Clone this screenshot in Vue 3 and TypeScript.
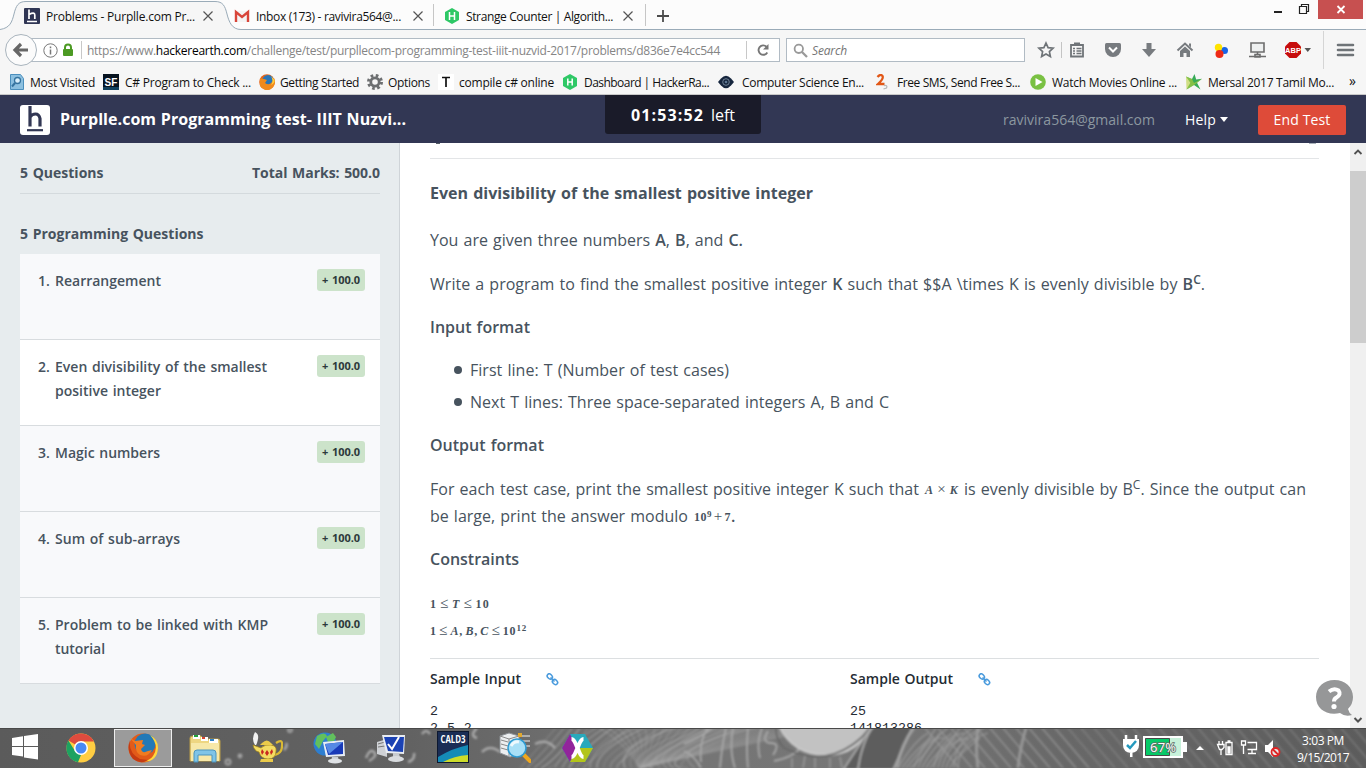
<script setup lang="ts">
import type { Directive } from 'vue'

// Stretches or tightens tracking so that a label fills the given width in pixels.
const vFit: Directive<HTMLElement, number> = {
  mounted(el, { value }) {
    const natural = el.getBoundingClientRect().width
    const count = (el.textContent ?? '').length
    if (count > 1) el.style.letterSpacing = `${(value - natural) / count}px`
  },
}

interface Bookmark { icon: string; label: string; slot: number; width: number; lead: number }

const bookmarks: Bookmark[] = [
  { icon: 'visited', label: 'Most Visited', slot: 93, width: 65, lead: 20 },
  { icon: 'sf', label: 'C# Program to Check ...', slot: 156, width: 126, lead: 22 },
  { icon: 'firefox', label: 'Getting Started', slot: 108, width: 79, lead: 21 },
  { icon: 'gear', label: 'Options', slot: 71, width: 42, lead: 21 },
  { icon: 't', label: 'compile c# online', slot: 125, width: 95, lead: 21 },
  { icon: 'hr', label: 'Dashboard | HackerRa...', slot: 155, width: 125, lead: 21 },
  { icon: 'eye', label: 'Computer Science En...', slot: 158, width: 122, lead: 24 },
  { icon: 'two', label: 'Free SMS, Send Free S...', slot: 154, width: 123, lead: 21 },
  { icon: 'play', label: 'Watch Movies Online ...', slot: 156, width: 125, lead: 22 },
  { icon: 'star', label: 'Mersal 2017 Tamil Mo...', slot: 160, width: 126, lead: 22 },
]

const questions = [
  { id: 1, lines: [{ text: 'Rearrangement', width: 106 }] },
  { id: 2, lines: [{ text: 'Even divisibility of the smallest', width: 212 }, { text: 'positive integer', width: 106 }], active: true },
  { id: 3, lines: [{ text: 'Magic numbers', width: 105 }] },
  { id: 4, lines: [{ text: 'Sum of sub-arrays', width: 125 }] },
  { id: 5, lines: [{ text: 'Problem to be linked with KMP', width: 213 }, { text: 'tutorial', width: 50 }] },
]

const sampleInput = '2\n2 5 2'
const sampleOutput = '25\n141813286'

const hatch = Array.from({ length: 34 }, (_, i) => 925 + i * 13)
const strands = Array.from({ length: 26 }, (_, i) => i)
</script>

<template>
  <div class="screen">
    <header class="tabs">
      <svg class="tabshape" width="1366" height="30" viewBox="0 0 1366 30">
        <path d="M0 29.5C10 28 12 22 14 14C16 6 18 1.500 26 1.500H215C223 1.500 225 6 227 14C229 22 232 29.500 241 29.500V30H0Z" fill="#f6f6f6" />
        <path d="M0 29.500C10 28 12 22 14 14C16 6 18 1.500 26 1.500H215C223 1.500 225 6 227 14C229 22 232 29.500 241 29.500H1366" fill="none" stroke="#9aabb8" />
      </svg>
      <div class="tab first">
        <svg class="fav" width="16" height="16" viewBox="0 0 16 16"><rect width="16" height="16" rx="1" fill="#2f3554" /><path d="M5 1.500V11M5 6.500Q10.800 3.500 10.800 7V11M3 13.500h10" fill="none" stroke="#fff" stroke-width="1.700" /></svg>
        <span class="name"><span v-fit="149" class="t">Problems - Purplle.com Pr...</span></span>
        <svg width="12" height="12" viewBox="0 0 12 12"><path d="M1.500 1.500l9 9M10.500 1.500l-9 9" stroke="#555" stroke-width="1.200" /></svg>
      </div>
      <div class="tab second">
        <svg class="fav" width="16" height="16" viewBox="0 0 16 16"><path d="M1 3h14v11H1z" fill="#f4f4f4" /><path d="M2 14V4l6 5 6-5v10" fill="none" stroke="#d8453a" stroke-width="2.400" /></svg>
        <span class="name"><span v-fit="145" class="t">Inbox (173) - ravivira564@...</span></span>
        <svg width="12" height="12" viewBox="0 0 12 12"><path d="M1.500 1.500l9 9M10.500 1.500l-9 9" stroke="#555" stroke-width="1.200" /></svg>
      </div>
      <div class="tab third">
        <svg class="fav" width="16" height="16" viewBox="0 0 16 16"><path d="M8 0l7 4v8l-7 4-7-4V4z" fill="#2ec866" /><path d="M5.500 4v8M10.500 4v8M5.500 8h5" stroke="#fff" stroke-width="1.500" /></svg>
        <span class="name"><span v-fit="147" class="t">Strange Counter | Algorith...</span></span>
        <svg width="12" height="12" viewBox="0 0 12 12"><path d="M1.500 1.500l9 9M10.500 1.500l-9 9" stroke="#555" stroke-width="1.200" /></svg>
      </div>
      <svg class="plus" width="12" height="12" viewBox="0 0 12 12"><path d="M6 0v12M0 6h12" stroke="#4c4c4c" stroke-width="1.800" /></svg>
      <div class="winbtns">
        <svg width="98" height="19" viewBox="0 0 98 19">
          <path d="M6 12h8" stroke="#222" stroke-width="2" />
          <path d="M31.500 6.500h7v7h-7zM33.500 6V4.500h7v7H39" fill="none" stroke="#222" stroke-width="1.200" />
          <rect x="50" width="45" height="19" fill="#c75050" />
          <path d="M69.500 6l7 7M76.500 6l-7 7" stroke="#fff" stroke-width="1.800" />
        </svg>
      </div>
    </header>

    <div class="nav">
      <div class="url">
        <svg class="info" width="15" height="15" viewBox="0 0 15 15"><circle cx="7.500" cy="7.500" r="6.700" fill="none" stroke="#777" /><path d="M7.500 3.500v1.700M7.500 6.500v5" stroke="#777" stroke-width="1.500" /></svg>
        <svg class="lock" width="12" height="14" viewBox="0 0 12 14"><path d="M3 7V4.500a3 3 0 0 1 6 0V7" fill="none" stroke="#4c9a23" stroke-width="2" /><rect x="1" y="6" width="10" height="7" rx="1" fill="#4c9a23" /></svg>
        <i class="sep"></i>
        <span class="addr"><span v-fit="633" class="t">https://www.<b>hackerearth.com</b>/challenge/test/purpllecom-programming-test-iiit-nuzvid-2017/problems/d836e7e4cc544</span></span>
        <i class="sep"></i>
        <svg class="reload" width="14" height="14" viewBox="0 0 14 14"><path d="M11.300 9.500A4.700 4.700 0 1 1 10.500 3.700" fill="none" stroke="#777" stroke-width="1.900" /><path d="M12.500 1v5.500H7z" fill="#777" /></svg>
      </div>
      <svg class="back" width="34" height="34" viewBox="0 0 34 34"><circle cx="17" cy="17" r="15.500" fill="#fbfbfb" stroke="#a9b4bd" /><path d="M17 11l-6 6 6 6M11.500 17H24" fill="none" stroke="#666" stroke-width="3.200" /></svg>
      <div class="search">
        <svg width="15" height="15" viewBox="0 0 15 15"><circle cx="5.800" cy="5.800" r="4.200" fill="none" stroke="#999" stroke-width="1.800" /><path d="M9 9l5 5" stroke="#999" stroke-width="2.300" /></svg>
        <span v-fit="35" class="t">Search</span>
      </div>
      <svg class="tool bm" width="26" height="20" viewBox="0 0 26 20"><path d="M10 3l2.100 4.600 5 .6-3.700 3.400 1 5-4.400-2.500-4.400 2.500 1-5L2.900 8.200l5-.6z" fill="none" stroke="#6f7478" stroke-width="1.700" /><path d="M25.500 2v16" stroke="#c4c4c4" /></svg>
      <div class="tools">
        <svg width="20" height="20" viewBox="0 0 20 20"><path d="M4 5h12v11.500H4z" fill="none" stroke="#6f7478" stroke-width="1.800" /><path d="M7 2.500h6V6H7z" fill="#6f7478" /><path d="M6 8.500h2M6 11h2M6 13.500h2M9.500 8.500h5M9.500 11h5M9.500 13.500h5" fill="none" stroke="#6f7478" stroke-width="1.300" /></svg>
        <svg width="20" height="20" viewBox="0 0 20 20"><path d="M3.500 3h13q1.500 0 1.500 1.500V9a8 8 0 0 1-16 0V4.500Q2 3 3.500 3z" fill="#777b7f" /><path d="M6 7.500l4 4 4-4" fill="none" stroke="#fff" stroke-width="2" /></svg>
        <svg width="20" height="20" viewBox="0 0 20 20"><path d="M7.500 3h5v6H17l-7 8-7-8h4.500z" fill="#777b7f" /></svg>
        <svg width="20" height="20" viewBox="0 0 20 20"><path d="M2.500 10.500L10 3.500l7.500 7" fill="none" stroke="#777b7f" stroke-width="2" /><path d="M5 11l5-4.500 5 4.500v6h-3.500v-4h-3v4H5zM14 3.500h2v4l-2-2z" fill="#777b7f" /></svg>
        <svg width="20" height="20" viewBox="0 0 20 20"><circle cx="13.500" cy="10.500" r="3.500" fill="#1764e8" /><circle cx="7.500" cy="7.500" r="3.700" fill="#ffe300" /><circle cx="8.500" cy="14" r="4" fill="#ee2a16" /></svg>
        <svg width="20" height="20" viewBox="0 0 20 20"><path d="M4 3h13v9H4zM10.500 12v3M2 16.500h17M8 14.500h5v2.500H8z" fill="#eef0f0" stroke="#6d6d6d" stroke-width="1.600" /></svg>
        <svg width="28" height="20" viewBox="0 0 28 20"><path d="M6.500 2h7L18 6.500v7L13.500 18h-7L2 13.500v-7z" fill="#c70d0d" /><text x="10" y="13" font-size="7.500" font-weight="bold" fill="#fff" text-anchor="middle" font-family="Liberation Sans">ABP</text><path d="M21.500 8H28l-3.250 4z" fill="#555" /></svg>
      </div>
      <svg class="menu" width="34" height="38" viewBox="0 0 34 38"><path d="M.5 0v38" stroke="#d5d5d5" /><path d="M15 14h15M15 19h15M15 24h15" stroke="#6f7478" stroke-width="2.600" stroke-linecap="round" /></svg>
    </div>

    <div class="bookmarks">
      <div v-for="b in bookmarks" :key="b.icon" class="bookmark" :style="{ width: b.slot + 'px' }">
        <span class="bicon" :style="{ width: b.lead + 'px' }">
          <svg width="16" height="16" viewBox="0 0 16 16">
            <template v-if="b.icon === 'visited'"><path d="M.5.500h10l3 4v11H.5z" fill="#8cc0e0" stroke="#4b8fbd" /><circle cx="7.500" cy="6.500" r="3" fill="#d9effb" stroke="#35739f" stroke-width="1.300" /><path d="M5 9l-3 3.500" stroke="#35739f" stroke-width="2" /></template>
            <template v-else-if="b.icon === 'sf'"><rect width="16" height="16" fill="#07131f" /><path d="M0 13h16v3H0z" fill="#12405c" /><text x="8" y="11.500" font-size="10" font-weight="bold" fill="#fff" text-anchor="middle" font-family="Liberation Sans">SF</text></template>
            <template v-else-if="b.icon === 'firefox'"><circle cx="8" cy="8" r="7.800" fill="#e4671c" /><circle cx="9" cy="6.500" r="5.500" fill="#2a76b8" /><path d="M1 4q2 1 4 1l3 1-2 3q4 3 7-1l2-4a8 8 0 0 1-14 8z" fill="#f08a1d" /><path d="M12 2q3 5 0 9 4-2 3.500-5z" fill="#ffcf3f" /></template>
            <template v-else-if="b.icon === 'gear'"><circle cx="8" cy="8" r="6.500" fill="none" stroke="#6d6f71" stroke-width="3" stroke-dasharray="2.600 2.505" /><circle cx="8" cy="8" r="4.200" fill="none" stroke="#6d6f71" stroke-width="2.800" /></template>
            <template v-else-if="b.icon === 't'"><rect width="16" height="16" fill="#fff" /><path d="M4 3.500h8M8 3.500V13" stroke="#111" stroke-width="1.700" /></template>
            <template v-else-if="b.icon === 'hr'"><path d="M7 0l7 4v8l-7 4-7-4V4z" fill="#2ec866" /><path d="M4.800 4.500v7M9.200 4.500v7M5 8h4" stroke="#fff" stroke-width="1.500" /></template>
            <template v-else-if="b.icon === 'eye'"><path d="M0 8l3-3.500Q8-1 13 4.500L16 8l-3 3.500Q8 17 3 11.500z" fill="#16263e" /><circle cx="8" cy="8" r="3.300" fill="none" stroke="#8496aa" stroke-width=".8" /><circle cx="8" cy="8" r="1.300" fill="#5c7692" /></template>
            <template v-else-if="b.icon === 'two'"><path d="M1.500 3Q4.500-.5 6.500 2q1.500 2.500-4.500 8h6.500" fill="none" stroke="#e25717" stroke-width="2.300" /><path d="M8 11.500q4-.5 2.500 2.500l-3 1" fill="none" stroke="#b7b7b7" stroke-width="1.300" /></template>
            <template v-else-if="b.icon === 'play'"><circle cx="8" cy="8" r="7.800" fill="#7ac143" /><path d="M5.500 4l7 4-7 4z" fill="#fff" /></template>
            <template v-else><path d="M8.500 0l1.700 5.500 5.800-.8-5 4 3.500 6.800L8 11l-7.500 4.500 3.800-6.800L0 2.500l6 2.500z" fill="#37ab57" /><path d="M0 2.500L6 5l2 4 8-4.300-5 4L8 11l-7.500 4.500z" fill="#b8cf3b" opacity=".6" /></template>
          </svg>
        </span>
        <span v-fit="b.width" class="t">{{ b.label }}</span>
      </div>
      <span class="more">»</span>
    </div>

    <div class="apphead">
      <svg class="logo" width="30" height="30" viewBox="0 0 30 30"><rect width="30" height="30" rx="3" fill="#fff" /><path d="M10 1v20.500M10 12q2-3 5.500-3t4.500 4.500v8" fill="none" stroke="#323754" stroke-width="3.200" /><path d="M7 25.200h16" stroke="#323754" stroke-width="2.200" /></svg>
      <span class="apptitle"><span v-fit="346" class="t">Purplle.com Programming test- IIIT Nuzvi...</span></span>
      <div class="timer"><b v-fit="73" class="t">01:53:52</b><span v-fit="24" class="t">left</span></div>
      <span class="mail"><span v-fit="152" class="t">ravivira564@gmail.com</span></span>
      <span class="help"><span v-fit="31" class="t">Help</span><svg width="8" height="5" viewBox="0 0 8 5"><path d="M0 0h8L4 5z" fill="#fff" /></svg></span>
      <span class="end"><span v-fit="57" class="t">End Test</span></span>
    </div>

    <div class="page">
      <aside>
        <div class="totals"><span v-fit="83.500" class="t">5 Questions</span><span v-fit="128" class="t">Total Marks: 500.0</span></div>
        <div class="group"><span v-fit="183.500" class="t">5 Programming Questions</span></div>
        <div v-for="q in questions" :key="q.id" class="question" :class="{ active: q.active }">
          <span class="num">{{ q.id }}.</span>
          <div class="qname"><div v-for="l in q.lines" :key="l.text"><span v-fit="l.width" class="t">{{ l.text }}</span></div></div>
          <span class="marks"><span v-fit="38" class="t">+ 100.0</span></span>
        </div>
      </aside>
      <main>
        <div class="cut"><i></i><i class="pale"></i></div>
        <h1><span v-fit="383" class="t">Even divisibility of the smallest positive integer</span></h1>
        <p class="p1"><span v-fit="313" class="t">You are given three numbers <b>A</b>, <b>B</b>, and <b>C.</b></span></p>
        <p class="p2"><span v-fit="775" class="t">Write a program to find the smallest positive integer <b>K</b> such that $$A \times K is evenly divisible by <b>B<sup>C</sup></b>.</span></p>
        <h2><span v-fit="100" class="t">Input format</span></h2>
        <ul>
          <li><span v-fit="259" class="t">First line: T (Number of test cases)</span></li>
          <li><span v-fit="419" class="t">Next T lines: Three space-separated integers A, B and C</span></li>
        </ul>
        <h2><span v-fit="114" class="t">Output format</span></h2>
        <p class="p3">
          <span v-fit="489" class="t">For each test case, print the smallest positive integer K such that</span><span class="math gap"><span v-fit="34" class="t"><i>A</i> <u>×</u> <i>K</i></span></span><span v-fit="342" class="t">is evenly divisible by B<sup>C</sup>. Since the output can</span>
        </p>
        <p class="p4"><span v-fit="258" class="t">be large, print the answer modulo</span><span class="math gap"><span v-fit="37" class="t">10<sup>9</sup> <u>+</u> 7</span></span><b>.</b></p>
        <h2 class="cons"><span v-fit="89" class="t">Constraints</span></h2>
        <p class="math m1"><span v-fit="60" class="t">1 <u>≤</u> <i>T</i> <u>≤</u> 10</span></p>
        <p class="math"><span v-fit="97" class="t">1 <u>≤</u> <i>A</i>, <i>B</i>, <i>C</i> <u>≤</u> 10<sup>12</sup></span></p>
        <div class="samples">
          <section>
            <h3><span v-fit="91" class="t">Sample Input</span><svg width="13" height="13" viewBox="0 0 13 13"><ellipse cx="3.800" cy="3.500" rx="2.900" ry="2.200" transform="rotate(45 3.800 3.500)" /><ellipse cx="9" cy="9" rx="2.900" ry="2.200" transform="rotate(45 9 9)" /><path d="M4.500 4.500l4 4" /></svg></h3>
            <pre>{{ sampleInput }}</pre>
          </section>
          <section>
            <h3><span v-fit="103" class="t">Sample Output</span><svg width="13" height="13" viewBox="0 0 13 13"><ellipse cx="3.800" cy="3.500" rx="2.900" ry="2.200" transform="rotate(45 3.800 3.500)" /><ellipse cx="9" cy="9" rx="2.900" ry="2.200" transform="rotate(45 9 9)" /><path d="M4.500 4.500l4 4" /></svg></h3>
            <pre>{{ sampleOutput }}</pre>
          </section>
        </div>
      </main>
      <div class="scroll">
        <svg width="16" height="28" viewBox="0 0 16 28"><path d="M4.500 11L8 7.500l3.500 3.500" fill="none" stroke="#505050" stroke-width="1.800" /></svg>
        <div class="thumb"></div>
        <svg class="down" width="16" height="16" viewBox="0 0 16 16"><path d="M4.500 6L8 9.500 11.500 6" fill="none" stroke="#505050" stroke-width="2" /></svg>
      </div>
      <svg class="bubble" width="40" height="40" viewBox="0 0 40 40"><path d="M19.500 1C30 1 38 8 38 18q0 7-5 12 1 4 4 6-7 2-12-2C12 37 1 30 1 18 1 8 9 1 19.500 1z" fill="#8b8c8d" opacity=".9" /><path d="M14 12.500q5-4 9.500-1 3 4-2 7-2.500 1.300-2.500 4" fill="none" stroke="#fff" stroke-width="4" /><circle cx="19" cy="27.500" r="2.600" fill="#fff" /></svg>
    </div>

    <footer>
      <svg class="wall" width="1366" height="40" viewBox="0 0 1366 40">
        <defs>
          <linearGradient id="bar" x1="0" x2="1366" y1="0" y2="0" gradientUnits="userSpaceOnUse"><stop offset="0" stop-color="#5b5b5b" /><stop offset=".3" stop-color="#626262" /><stop offset=".47" stop-color="#747474" /><stop offset=".65" stop-color="#777" /><stop offset=".78" stop-color="#686868" /><stop offset="1" stop-color="#5c5c5c" /></linearGradient>
          <filter id="soft" x="-10%" y="-20%" width="120%" height="140%"><feGaussianBlur stdDeviation=".9" /></filter>
        </defs>
        <rect width="1366" height="40" fill="url(#bar)" />
        <g filter="url(#soft)" fill="none" stroke="#a8a8a8" stroke-width="1.800">
          <path v-for="n in strands" :key="'l' + n" :d="`M${520 + n * 7} 40Q${540 + n * 5} ${18 + (n % 5) * 5} ${556 + n * 8} 0`" :opacity="0.25 + (n % 4) * 0.12" />
          <path v-for="n in strands" :key="'c' + n" :d="`M640 40Q${625 + n * 5} 15 ${600 + n * 9} 0`" opacity=".3" />
          <circle cx="228" cy="34" r="2.500" /><circle cx="240" cy="28" r="1.500" /><circle cx="290" cy="2" r="2" /><path d="M284 22q4-4 2-7M366 30q4-10 8-6t-5 9M408 34q7-2 6-9M422 6q4-6 8 0M477 0q-8 8 0 10M482 24q8-8 18 0M535 16q12-6 20 4" stroke-width="2.500" />
          <path d="M684 16q15-6 28-16M684 23q10 4 17 17M708 0q-9 12-7 34M720 40q2-23 6-40M735 40q-6-18-2-40M748 40q-2-20 0-40M760 30q-4-14 2-30M768 3q-7 12 3 12t2 12M774 33q20-4 27-14" />
          <path d="M779-2q14 29 47 29t43-29z" fill="#c2c2c2" stroke="#cacaca" />
          <path d="M776 0q-1 10 8 20l12 5q30 10 56-8 13-9 17-17" stroke="#666" /><path d="M792 40v-10M803 40l2-12M815 40V30M830 40V30M842 40l-2-11" opacity=".6" />
          <path d="M872-2L843 42h15Q862 12 874-2h39Q903 20 893 42h-37" fill="#5d5d5d" stroke="#a8a8a8" />
          <path d="M914 0q-13 16-17 40M978 0q-3 18 0 40M1018 40q2-20 8-40" stroke-width="3" opacity=".7" />
          <path v-for="n in 16" :key="'h' + n" :d="`M${894 + n * 4} 40Q${910 + n * 3} ${8 + (n % 5) * 6} ${924 + n * 4} ${n % 3 * 5}`" opacity=".5" />
          <path v-for="x in hatch" :key="x" :d="`M${x} 0l34 40`" stroke="#999" :opacity="x > 1060 ? 0.4 : 0.7" />
        </g>
        <path d="M0 .5h1366" stroke="#494949" />
      </svg>
      <div class="start"><svg width="26" height="26" viewBox="0 0 26 26"><path d="M0 4l11-1.700V12H0zM12 2l14-2v12H12zM0 13h11v9.500L0 21zM12 13h14v12.500L12 23.500z" fill="#fff" /></svg></div>
      <div class="apps">
        <span><svg width="32" height="32" viewBox="0 0 32 32"><circle cx="16" cy="16" r="14.500" fill="#ffcd42" /><path d="M16 16L3.500 8.500A14.500 14.500 0 0 1 29 9.500H16z" fill="#de4b3e" /><path d="M3.400 8.600L10 19l6 4-3 7.300A14.500 14.500 0 0 1 3.400 8.600z" fill="#1da261" /><circle cx="16" cy="16" r="7" fill="#fff" /><circle cx="16" cy="16" r="5.500" fill="#4889f4" /></svg></span>
        <span class="on"><svg width="32" height="32" viewBox="0 0 32 32"><circle cx="16" cy="16" r="14.500" fill="#e25b19" /><circle cx="18" cy="12" r="10.500" fill="#2279b7" /><path d="M3 6l5 3 8-1-1 4 3 1-4 4q1 5 7 2l4-1q-4 8-12 5Q8 20 9 13z" fill="#f17b20" /><path d="M23 3q10 11 3 21-4 6-13 5 17 3 18-13Q31 7 23 3z" fill="#ffd83c" /><path d="M3 8q-2 13 10 19l8 1Q14 33 6 27-1 18 3 8z" fill="#c53b12" /></svg></span>
        <span><svg width="32" height="32" viewBox="0 0 32 32"><path d="M1 6q0-2 3-2h8l2 3h15q2 0 2 2v20H1z" fill="#eed681" stroke="#b99d49" /><path d="M2 11h28v18H2z" fill="#f7e8a8" /><path d="M4 3h7v4H4z" fill="#fff" /><path d="M5 3h4v2H5z" fill="#21a33a" /><path d="M12 5h7v4h-7zM20 7h9v4h-9z" fill="#fff" /><path d="M13 5h3v2h-3z" fill="#d5452f" /><path d="M21 7h4v2h-4z" fill="#2f82c7" /><path d="M5 30v-9q0-3 3-3h16q3 0 3 3v9h-4v-7H9v7z" fill="#7fc4e7" stroke="#4c94bd" /></svg></span>
        <span><svg width="32" height="32" viewBox="0 0 32 32"><path d="M4 13Q0 7 4 0q4 2 3 7t-2 6z" fill="#f1f1f1" /><path d="M25 11q7-5 6 3 0 7-7 9" fill="none" stroke="#d9b935" stroke-width="2.200" /><path d="M2 13l8 3q4-4 10-3t5 6q0 8-8 8-7 0-9-7-5-1-6-7z" fill="#f3dc63" stroke="#a78516" stroke-width=".7" /><path d="M11 11q5-5 9 0l2 2H9zM10 27h12v3H9z" fill="#ebcb4a" /><path d="M11 17l2 3-2 3-1-3zM16 18l2 3-2 3-2-3zM21 17l1 3-2 3-1-3z" fill="#c9291f" /></svg></span>
        <span><svg width="32" height="32" viewBox="0 0 32 32"><circle cx="12" cy="12" r="11.500" fill="#2d7ed0" /><path d="M4 4q8-5 10 0l-4 5-4 8-4-5zM13 5l7-4 3 4-2 4-6 1z" fill="#62c05d" /><path d="M10 10l21-2 1 16-19 1z" fill="#e7edf4" /><path d="M12 12l18-2v12l-15 1z" fill="#183ab8" /><path d="M12 12l18-2-14 12z" fill="#5589e5" /><path d="M19 25h6l1 4h-8z" fill="#c9ced4" /><ellipse cx="22" cy="29" rx="7" ry="2.500" fill="#dfe2e5" /></svg></span>
        <span><svg width="32" height="32" viewBox="0 0 32 32"><path d="M2 10l10-3v18L2 22z" fill="#cfd2d6" /><path d="M3 12l7-2M3 15l7-1" stroke="#777" /><path d="M7 3h23l-1 19-18-1z" fill="#e9edf2" /><path d="M9 5h20l-1 15-15-1z" fill="#1b42b4" /><path d="M13 12l4 5 7-12" fill="none" stroke="#fff" stroke-width="2" /><path d="M18 21h6l1 5h-7z" fill="#c7cbd0" /><ellipse cx="21" cy="27" rx="8" ry="3" fill="#d9dcdf" /></svg></span>
        <span><svg class="dict" width="32" height="32" viewBox="0 0 32 32"><rect x=".5" y=".5" width="31" height="31" fill="#1a2d55" stroke="#0d1830" /><path d="M1 26Q16 17 31 14v17H1z" fill="#158bb7" /><path d="M6 31q11-6 25-7v7z" fill="#cddc2b" /><text x="16" y="11.500" font-size="10" font-weight="bold" textLength="25" lengthAdjust="spacingAndGlyphs" fill="#fff" text-anchor="middle" font-family="Open Sans">CALD3</text></svg></span>
        <span><svg width="32" height="32" viewBox="0 0 32 32"><path d="M1 4l9-3 10 3v18l-9 3L1 21z" fill="#eceef0" stroke="#8d9297" /><path d="M1 4l9 3 10-3M10 7v17M2 8l7 2M2 12l7 2M2 16l7 2" fill="none" stroke="#888" /><path d="M20 4h11M22 9h9M24 14h7" stroke="#f0f0f0" /><path d="M19 1h4v4h-4z" fill="#e2a82d" /><path d="M25 23l6 6" stroke="#efa71d" stroke-width="4" stroke-linecap="round" /><circle cx="18" cy="16" r="9" fill="#a8e0f7" stroke="#2e9bd2" stroke-width="1.600" /><path d="M12 14q3-5 8-4" stroke="#fff" fill="none" stroke-width="3" opacity=".8" /></svg></span>
        <span><svg width="32" height="32" viewBox="0 0 32 32"><path d="M9 2h15l8 14-8 14H9L1 16z" fill="#28a9bc" /><path d="M9 2L1 16l8 14 7-14z" fill="#92259b" /><path d="M16 16h16l-8 14H9z" fill="#b3c51a" /><path d="M10.500 7c3 0 4 5 6 9s3 9 6 9M22.500 7c-3 0-4 5-6 9s-3 9-6 9" fill="none" stroke="#fff" stroke-width="4" /></svg></span>
      </div>
      <div class="tray">
        <svg width="160" height="30" viewBox="0 0 160 30">
          <path d="M3 2v5M13 2v5" stroke="#fff" stroke-width="2.500" /><path d="M0 6h16v6q0 7-8 8-8-1-8-8zM7 19h2.500v5H7z" fill="#fff" /><path d="M4 12l3 3 6-7" stroke="#2499bd" stroke-width="2.500" fill="none" />
          <path d="M21 4h38v20H21z" fill="#c7f1da" stroke="#fff" stroke-width="2" /><path d="M22.500 5.500h24v17h-24z" fill="#07ca68" stroke="#494949" /><path d="M60 9h4v10h-4z" fill="#fff" /><text x="40" y="18.500" font-size="13" textLength="26" fill="#fff" stroke="#5f6f66" stroke-width="1.600" paint-order="stroke" text-anchor="middle" font-family="Open Sans">67%</text>
          <path d="M73 17l4-4 4 4z" fill="#fff" />
          <g fill="none" stroke="#fff" stroke-width="1.300"><path d="M96 8v3M99.500 8v3M94.500 11.500h6.500v3l-2 2h-2.500zM98 16v6M103 9.500h6v12h-6zM104.500 8h3" /><path d="M105 14h2v6h-2z" fill="#fff" /><path d="M124.500 9.500h9v7h-9M118.500 8h4v4h-4zM120.500 12v9M129 17v3M125 20.500h8" /></g>
          <path d="M142 12h3l5-5v17l-5-5h-3z" fill="#fff" /><circle cx="152.500" cy="19" r="4" fill="#e9e9e9" stroke="#df2525" stroke-width="1.800" /><path d="M149.500 16l6 6" stroke="#df2525" stroke-width="1.800" />
        </svg>
        <div class="clock"><span v-fit="42" class="t">3:03 PM</span><span v-fit="52" class="t">9/15/2017</span></div>
      </div>
    </footer>
  </div>
</template>

<style>
body { margin: 0; overflow: hidden; }
</style>

<style scoped>
* { box-sizing: border-box; }
.screen { width: 1366px; height: 768px; display: flex; flex-direction: column; overflow: hidden; background: #fff; font-family: "Open Sans", "Noto Sans", sans-serif; color: #111; }
svg { display: block; flex: none; }
.t { display: inline-block; white-space: pre; }
.tabs { position: relative; height: 30px; flex: none; display: flex; align-items: center; background: #fcfcfc; font-size: 12px; }
.tabs > * { position: relative; }
.tabs .tabshape { position: absolute; left: 0; top: 0; }
.tab { display: flex; align-items: center; height: 30px; padding-top: 2px; flex: none; }
.tab .fav { margin-right: 6px; }
.tab .name { width: 156px; flex: none; }
.first { width: 210px; margin-left: 24px; }
.second { width: 200px; border-right: 1px solid #c6c6c6; height: 22px; }
.third { width: 202px; margin-left: 10px; border-right: 1px solid #c6c6c6; height: 22px; }
.plus { margin-left: 11px; margin-top: 2px; }
.winbtns { margin-left: auto; align-self: flex-start; }
.nav { position: relative; height: 40px; flex: none; background: #f6f6f6; display: flex; align-items: center; }
.url { margin-left: 21px; width: 759px; height: 24px; border: 1px solid #b1bbc4; background: #fff; display: flex; align-items: center; padding-left: 21px; font-size: 12px; color: #858585; flex: none; }
.url b { font-weight: 400; color: #000; }
.info { margin-right: 4px; }
.lock { margin-right: 7px; }
.sep { width: 1px; height: 18px; background: #c8c8c8; }
.addr { width: 664px; padding-left: 5px; flex: none; }
.reload { margin-left: 9px; }
.back { position: absolute; left: 4px; top: 3px; }
.search { margin-left: 6px; width: 239px; height: 24px; border: 1px solid #b1bbc4; background: #fff; display: flex; align-items: center; padding-left: 6px; gap: 4px; font-size: 12px; font-style: italic; color: #757575; flex: none; }
.bm { margin-left: 11px; }
.tools { display: flex; margin-left: 5px; gap: 16px; }
.menu { margin-left: 12px; }
.bookmarks { height: 25px; flex: none; background: #f6f6f6; border-bottom: 1px solid #c9c9c9; padding-left: 10px; display: flex; align-items: center; font-size: 12px; }
.bookmark { display: flex; align-items: center; flex: none; }
.bicon { flex: none; }
.more { font-size: 14px; margin-top: -3px; margin-left: 3px; }
.apphead { position: relative; height: 48px; flex: none; background: #323754; display: flex; align-items: center; padding-left: 20px; color: #fff; }
.apptitle { margin-left: 10px; width: 545px; font-size: 16px; font-weight: 700; word-spacing: 0.5px; }
.logo { margin-top: 1px; }
.timer { width: 156px; height: 39px; margin-top: -9px; margin-right: 242px; background: #1a1b29; border-radius: 0 0 3px 3px; display: flex; align-items: center; padding-left: 26px; gap: 7px; font-size: 16px; flex: none; }
.mail { width: 182px; color: #8c98a0; font-size: 14px; flex: none; }
.help { width: 73px; display: flex; align-items: center; gap: 4px; font-size: 14px; flex: none; }
.end { width: 88px; height: 30px; margin-top: 1px; border-radius: 2px; background: #de4b39; font-size: 14px; display: flex; align-items: center; justify-content: center; flex: none; }
.page { position: relative; height: 585px; flex: none; display: flex; overflow: hidden; }
aside { width: 400px; flex: none; background: #e7ecee; border-right: 1px solid #cfd4d8; padding: 0 19px 0 20px; color: #47535e; font-size: 14px; font-weight: 700; word-spacing: 1px; }
.totals { height: 51px; border-bottom: 1px solid #d4dadd; display: flex; justify-content: space-between; align-items: center; padding-top: 9px; width: 360px; }
.group { height: 60px; padding-top: 30px; line-height: 20px; }
.question { width: 360px; height: 86px; background: #f8f9fb; border-bottom: 1px solid #d8dcdf; display: flex; padding: 15px 15px 0 18px; line-height: 24px; font-weight: 600; }
.question.active { background: #fff; }
.num { width: 17px; flex: none; }
.qname { flex: 1; }
.marks { width: 48px; height: 22px; border-radius: 3px; background: #cce3ca; color: #2d393b; font-size: 11px; font-weight: 700; line-height: 22px; text-align: center; }
main { width: 950px; flex: none; padding: 0 31px 0 30px; color: #47535e; font-size: 16px; line-height: 27px; word-spacing: 0.9px; }
.cut { height: 16px; border-bottom: 1px solid #e3e5e7; display: flex; justify-content: space-between; padding: 0 3px 0 6px; }
.cut i { width: 4px; height: 1px; background: #555d66; }
.cut .pale { width: 7px; background: #aab2bb; }
h1, h2, h3, p, ul, pre { margin: 0; font-size: 16px; line-height: 27px; white-space: nowrap; }
h1 { margin-top: 21px; }
h2 { font-weight: 600; }
p b { font-weight: 600; }
.p1 { margin-top: 20px; }
.p2 { margin-top: 17px; margin-bottom: 16px; }
sup { line-height: 0; font-size: 75%; vertical-align: baseline; position: relative; top: -0.5em; }
ul { list-style: none; padding: 13px 0 14px 24px; }
li { height: 32px; line-height: 32px; display: flex; align-items: center; }
li::before { content: ""; width: 8px; height: 8px; border-radius: 50%; background: #47535e; margin-right: 8px; }
.p3 { margin-top: 17px; display: flex; height: 27px; }
.p4 { display: flex; height: 27px; }
.p4 b { font-weight: 600; }
.math { font-family: "Liberation Serif", serif; font-size: 12px; font-weight: 700; word-spacing: -1.5px; }
.math u { font-size: 15px; font-weight: 400; text-decoration: none; line-height: 0; }
.gap { margin: 1px 5px 0 6px; }
.p4 .gap { margin-right: 0; }
.cons { margin-top: 16px; }
.m1 { margin-top: 18px; }
.samples { margin-top: 13px; border-top: 1px solid #dcdfe1; display: flex; padding-top: 10px; }
.samples section { width: 420px; }
h3 { font-size: 14px; font-weight: 600; line-height: 20px; display: flex; align-items: center; gap: 25px; color: #252c33; }
h3 svg { fill: none; stroke: #4a9bdd; stroke-width: 1.6; }
pre { margin-top: 14px; font: 13.333px/17px "Liberation Mono", monospace; color: #252c33; white-space: pre; }
.scroll { width: 16px; background: #f0f0f0; display: flex; flex-direction: column; }
.thumb { height: 172px; background: #cdcdcd; }
.down { margin-top: auto; }
.bubble { position: absolute; left: 1315px; top: 536px; }
footer { position: relative; height: 40px; flex: none; display: flex; color: #fff; }
footer > * { position: relative; }
footer .wall { position: absolute; left: 0; top: 0; }
.start { width: 50px; padding: 6px 0 0 12px; flex: none; }
.apps { display: flex; }
.apps span { width: 62px; display: flex; align-items: center; justify-content: center; }
.apps .on { width: 58px; margin: 1px 2px; height: 38px; background: #9b9b9b; border: 1px solid #eee; }
.apps .dict { margin-top: -2px; }
.tray { margin-left: auto; width: 243px; display: flex; padding-top: 5px; }
.clock { width: 80px; font-size: 12px; line-height: 17px; display: flex; flex-direction: column; align-items: center; margin-top: -1px; }
</style>
